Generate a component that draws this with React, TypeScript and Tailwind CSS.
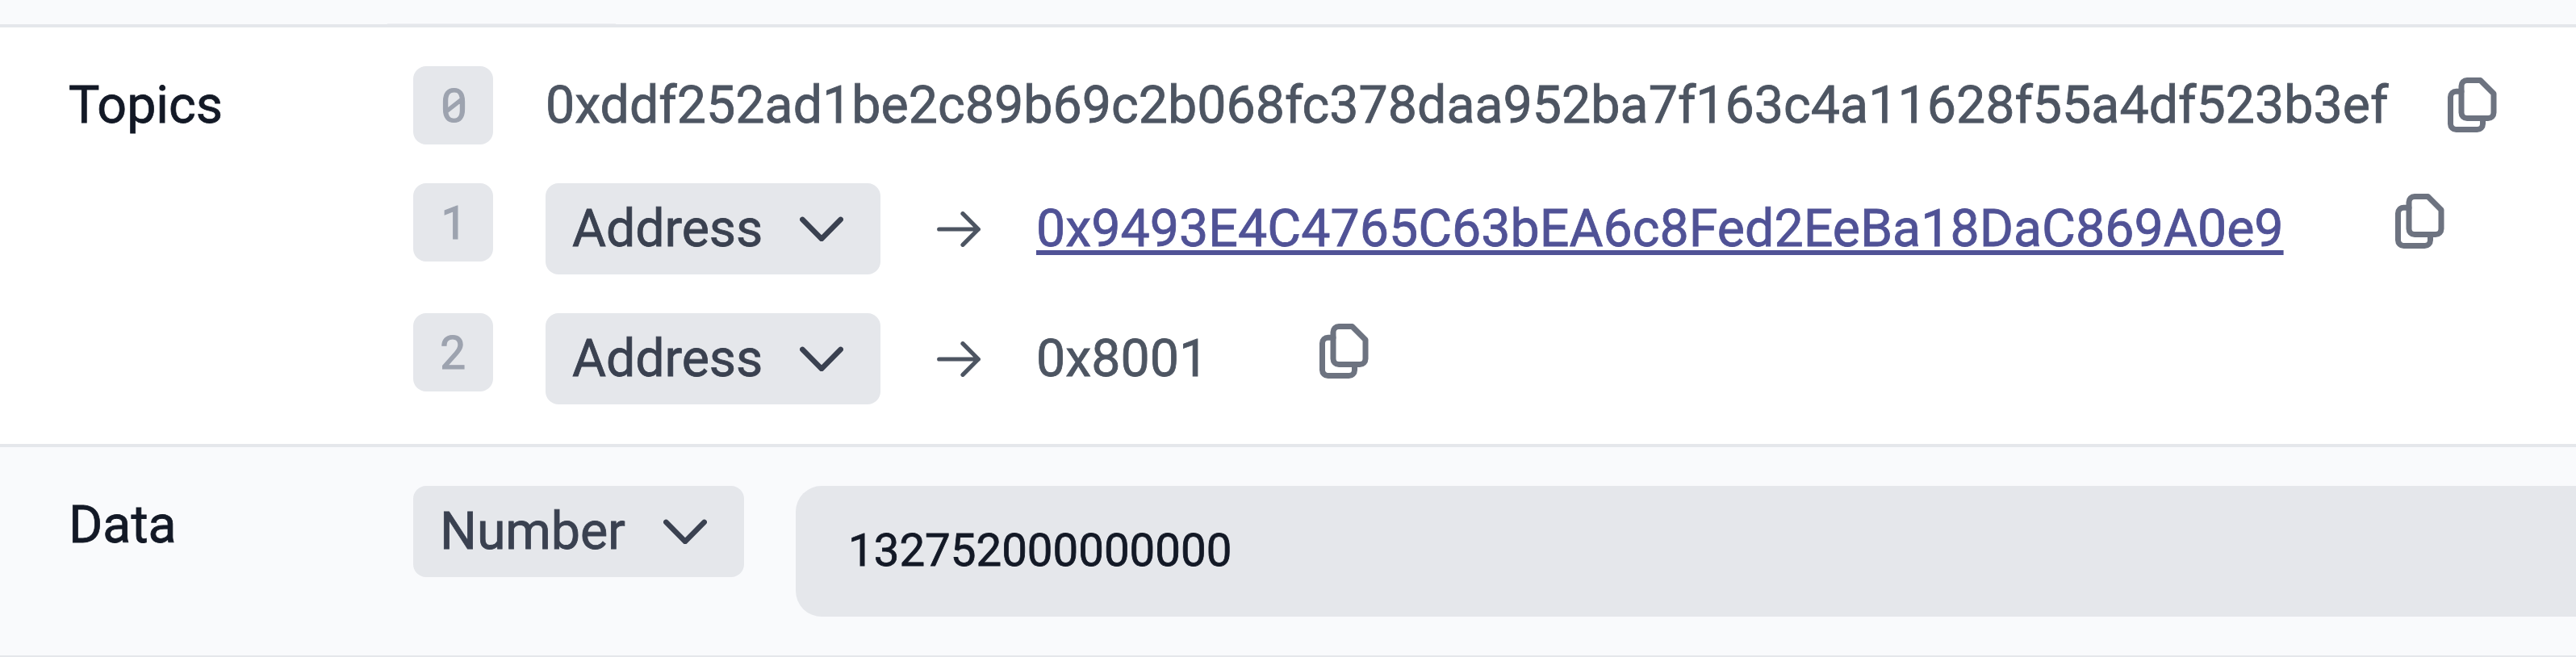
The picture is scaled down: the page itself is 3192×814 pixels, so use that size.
import React from "react";

const CopyIcon = () => (
  <svg className="h-[68px] w-[61px] shrink-0" viewBox="0 0 61 68" fill="none" stroke="#6d7380" strokeWidth="7" strokeLinejoin="round" strokeLinecap="round">
    <path d="M24 3.5H40.5L57 20V43.5a7 7 0 0 1-7 7H24a7 7 0 0 1-7-7V10.5a7 7 0 0 1 7-7Z" />
    <path d="M17 17.2H10.5a7 7 0 0 0-7 7V57.5a7 7 0 0 0 7 7H36.5a7 7 0 0 0 7-7V50.5" />
  </svg>
);

const Chevron = () => (
  <svg className="h-[31px] w-[54px] shrink-0" viewBox="0 0 54 31" fill="none" stroke="#3a4150" strokeWidth="6.5" strokeLinejoin="round" strokeLinecap="round">
    <path d="M3.3 3.9l23.7 24 23.7-24" />
  </svg>
);

const Arrow = () => (
  <svg className="h-[44px] w-[54px] shrink-0" viewBox="0 0 54 44" fill="none" stroke="#4d5562" strokeWidth="5.2" strokeLinejoin="round" strokeLinecap="round">
    <path d="M2.7 22h48.6M32 2.7L51.3 22 32 41.3" />
  </svg>
);

const Select = ({ label }: { label: string }) => (
  <div className="flex h-[113px] shrink-0 items-center justify-between rounded-2xl bg-[#e5e7eb] pl-[33px] pr-[46px] text-[#3a4150]">
    <span className="tracking-[-0.1px]">{label}</span>
    <Chevron />
  </div>
);

const Index = ({ n }: { n: number }) => (
  <div className="flex h-[97px] w-[99px] shrink-0 items-center justify-center rounded-2xl bg-[#e5e7eb] pb-[2px] pl-[2px] font-['Roboto_Mono',monospace] text-[56.5px] text-[#9da3af] [-webkit-text-stroke:1.2px]">
    {n}
  </div>
);

export default function App() {
  return (
    <div className="h-[814px] w-[3192px] overflow-hidden bg-[#f9fafc] font-['Roboto',sans-serif] text-[64.5px] leading-[97px] text-[#4d5562] [-webkit-text-stroke:0.8px]">
      <div className="flex h-[34px] items-end border-b-4 border-[#e5e7eb]">
        <div className="ml-[480px] h-px w-[283px] bg-[#eff0f3]" />
      </div>
      <section className="flex h-[520px] border-b-4 border-[#e5e7eb] bg-white pt-12 pl-[85px]">
        <h2 className="w-[427px] shrink-0 text-[#131926]">Topics</h2>
        <div className="flex flex-col gap-12">
          <div className="flex h-[97px] items-start">
            <Index n={0} />
            <span className="ml-[65px] w-[2285px] shrink-0 whitespace-nowrap">0xddf252ad1be2c89b69c2b068fc378daa952ba7f163c4a11628f55a4df523b3ef</span>
            <div className="ml-[72px] pt-[14px]"><CopyIcon /></div>
          </div>
          <div className="flex h-[113px] items-start">
            <Index n={1} />
            <div className="ml-[65px] grid w-[415px]"><Select label="Address" /></div>
            <div className="ml-[70px] flex h-[113px] items-center"><Arrow /></div>
            <a className="mt-2 ml-[69px] w-[1545px] shrink-0 whitespace-nowrap text-[#505296] underline decoration-[6px] underline-offset-[5px] [text-decoration-skip-ink:none]">0x9493E4C4765C63bEA6c8Fed2EeBa18DaC869A0e9</a>
            <div className="ml-[139px] pt-[13px]"><CopyIcon /></div>
          </div>
          <div className="flex h-[113px] items-start">
            <Index n={2} />
            <div className="ml-[65px] grid w-[415px]"><Select label="Address" /></div>
            <div className="ml-[70px] flex h-[113px] items-center"><Arrow /></div>
            <span className="mt-2 ml-[69px] w-[212px] shrink-0">0x8001</span>
            <div className="ml-[139px] pt-[13px]"><CopyIcon /></div>
          </div>
        </div>
      </section>
      <section className="flex h-[260px] items-start border-b-2 border-[#e5e7eb] pt-12 pl-[85px]">
        <h2 className="w-[427px] shrink-0 text-[#131926]">Data</h2>
        <div className="grid w-[410px] shrink-0"><Select label="Number" /></div>
        <div className="ml-16 h-[162px] flex-1 rounded-l-[32px] bg-[#e5e7eb] p-[32px] pl-[65px] text-[56.4px] text-[#131926]">132752000000000</div>
      </section>
    </div>
  );
}
